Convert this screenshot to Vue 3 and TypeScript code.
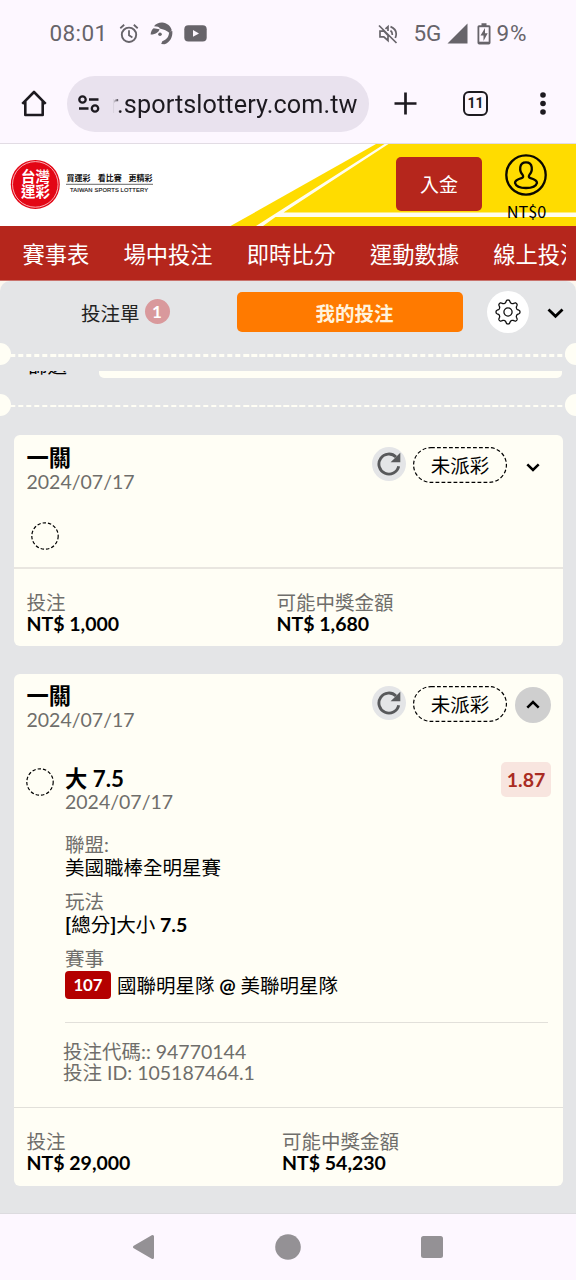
<script setup lang="ts">
interface Field {
  label: string
  parts: string[]
  tag?: string
}
interface Bet {
  title: string
  date: string
  open: boolean
  stake: string
  payout: string
}

const navItems: string[] = ['賽事表', '場中投注', '即時比分', '運動數據', '線上投注']
const bets: Bet[] = [
  { title: '一關', date: '2024/07/17', open: false, stake: 'NT$ 1,000', payout: 'NT$ 1,680' },
  { title: '一關', date: '2024/07/17', open: true, stake: 'NT$ 29,000', payout: 'NT$ 54,230' },
]
// Odd entries of `parts` are Latin runs, set in the bold weight.
const fields: Field[] = [
  { label: '聯盟:', parts: ['美國職棒全明星賽'] },
  { label: '玩法', parts: ['', '[', '總分', ']', '大小', ' 7.5'] },
  { label: '賽事', parts: ['國聯明星隊', ' @ ', '美聯明星隊'], tag: '107' },
]

const gearPath: string = (() => {
  const pts: string[] = []
  const steps = 160
  for (let i = 0; i < steps; i++) {
    const a = (i / steps) * Math.PI * 2
    const r = 10.7 + 1.45 * Math.tanh(1.6 * Math.cos(a * 8) - 0.2)
    pts.push(`${(r * Math.sin(a)).toFixed(2)} ${(-r * Math.cos(a)).toFixed(2)}`)
  }
  return `M${pts.join('L')}Z`
})()
</script>

<template>
  <div class="screen">
    <div class="status">
      <div class="status-left">
        <span class="clock">08:01</span>
        <svg class="alarm" width="20" height="21" viewBox="0 0 20 21" fill="none" stroke="#67646a" stroke-width="1.900">
          <circle cx="10" cy="11.8" r="7.2" />
          <path d="M10 7.2v5l3.4 2.2M1.300 5.2L5.2 1.8M18.700 5.2L14.8 1.8" stroke-width="1.800" />
        </svg>
        <svg class="face" width="23" height="23" viewBox="0 0 23 23">
          <path d="M.6 12.600C.8 9.500 2 7.500 3.600 6.200L9.500 7.200C8.800 9.800 6.200 12.200 .6 12.600Z" fill="#67646a" />
          <path d="M4 4.200C6 1.800 9 .5 12.200.6C17 1 20.300 3.800 21.800 8.200L19.200 10.800C16.500 8 13.500 7.400 9.800 6.400C9.500 5 7 4.200 4 4.200Z" fill="#67646a" />
          <circle cx="10" cy="12.300" r="1.800" fill="#67646a" />
          <path d="M19.200 9.600L22.300 9C23 14.800 20 20.500 14.500 22.200L11.200 22L12.300 19.200C16.800 18 19 14.500 19.200 9.600Z" fill="#67646a" />
        </svg>
        <svg class="tube" width="23" height="17" viewBox="0 0 23 17">
          <rect x=".3" y=".3" width="22.400" height="16.200" rx="4" fill="#67646a" />
          <path d="M9 5l6 3.400l-6 3.400z" fill="#fdf7ff" />
        </svg>
      </div>
      <div class="status-right">
        <svg class="mute" width="20" height="20" viewBox="0 0 20 20" fill="none" stroke="#67646a" stroke-width="1.700">
          <path d="M1 1.500L18.500 19M2 7.200H6L10 11.500V16.500L5.800 12.800H2ZM7.500 4.800L10 2.600V7M12.500 6.500Q14.500 8 14.300 11M12.500 2.600Q20.500 6 17.300 14" />
        </svg>
        <span class="net">5G</span>
        <svg class="signal" width="21" height="21" viewBox="0 0 21 21"><path d="M20.500.5V20.500H.5Z" fill="#67646a" /></svg>
        <svg class="battery" width="14" height="22" viewBox="0 0 14 22">
          <path d="M4.500.3h5v2h2.600q1.400 0 1.400 1.500v16q0 1.800-1.700 1.800H2.200Q.5 21.600.5 19.800V3.800Q.5 2.300 2 2.300h2.500z" fill="#67646a" />
          <path d="M2.300 4.200h9.400v14.500H2.300z" fill="#fdf7ff" />
          <path d="M8 5L3.500 12.500H6.500V18L10.700 10.300H8Z" fill="#67646a" />
        </svg>
        <span class="pct">9%</span>
      </div>
    </div>

    <div class="toolbar">
      <svg class="home" width="26" height="27" viewBox="0 0 26 27" fill="none" stroke="#1d1a20" stroke-width="2.600">
        <path d="M1.300 13.800L13 2L24.700 13.800M4.300 11.500V25H21.700V11.500" stroke-linejoin="round" />
      </svg>
      <div class="url">
        <svg width="22" height="18" viewBox="0 0 22 18" fill="none" stroke="#1d1a20" stroke-width="2.300">
          <circle cx="4.500" cy="4.500" r="3.200" /><path d="M11 4.500H20.500M1 13.500H10.500" /><circle cx="17" cy="13.500" r="3.200" />
        </svg>
        <div class="url-text"><span>r.sportslottery.com.tw</span></div>
      </div>
      <svg class="plus" width="23" height="23" viewBox="0 0 23 23"><path d="M11.500.5V22.500M.5 11.500H22.500" stroke="#1d1a20" stroke-width="2.700" /></svg>
      <div class="tabs-count">11</div>
      <svg class="dots" width="8" height="23" viewBox="0 0 8 23" fill="#1d1a20"><circle cx="4" cy="3" r="2.800" /><circle cx="4" cy="11.500" r="2.800" /><circle cx="4" cy="20" r="2.800" /></svg>
    </div>

    <header class="brand">
      <svg class="brand-bg" width="576" height="82" viewBox="0 0 576 82">
        <path d="M230.500 82L376 0H576V82Z" fill="#ffdc00" />
        <path d="M256 82L384.500 0H388.500L283.500 68.500H576V73H275.500L263 82Z" fill="#fffdf0" />
      </svg>
      <svg class="logo" width="144" height="52" viewBox="0 0 144 52">
        <circle cx="25.300" cy="26.400" r="24.500" fill="#e30615" />
        <circle cx="25.300" cy="26.400" r="22.800" fill="none" stroke="#ffd9dc" stroke-width=".8" />
        <g class="logo-mark" fill="#fff">
          <text x="11" y="24" textLength="29">台灣</text>
          <text x="11" y="38.800" textLength="29">運彩</text>
        </g>
        <g class="logo-slogan" fill="#111">
          <text x="56.500" y="22.800" textLength="24">買運彩</text>
          <text x="87.700" y="22.800" textLength="24">看比賽</text>
          <text x="118.500" y="22.800" textLength="24">更精彩</text>
        </g>
        <path d="M56 26.300H143" stroke="#444" stroke-width=".8" />
        <text class="logo-en" x="60" y="33.900" textLength="78" fill="#111">TAIWAN SPORTS LOTTERY</text>
      </svg>
      <button class="deposit">入金</button>
      <div class="account">
        <svg width="42" height="42" viewBox="0 0 42 42" fill="none" stroke="#0a0800">
          <circle cx="21" cy="21" r="19.700" stroke-width="2.300" />
          <path d="M17.600 20.800C15.300 18.500 15 15.500 15.300 13.200C15.700 10 18 8.300 21 8.300S26.300 10 26.700 13.200C27 15.500 26.700 18.500 24.400 20.800C23.300 22.500 23.800 23.700 25.500 24.200C29 25.200 32 26.300 32 29C31 32.500 26.500 34 21 34S11 32.500 10 29C10 26.300 13 25.200 16.500 24.200C18.200 23.700 18.700 22.500 17.600 20.800Z" stroke-width="2.300" />
        </svg>
        <span>NT$0</span>
      </div>
    </header>

    <nav class="nav">
      <div class="nav-track"><span v-for="n in navItems" :key="n">{{ n }}</span></div>
    </nav>

    <div class="panel-wrap">
      <main class="panel">
        <div class="tabs">
          <div class="slip"><span>投注單</span><span class="badge">1</span></div>
          <div class="mine">我的投注</div>
          <div class="gear">
            <svg width="28" height="28" viewBox="-14 -14 28 28" fill="none" stroke="#111" stroke-width="1.300">
              <path :d="gearPath" /><circle r="4.100" />
            </svg>
          </div>
          <svg class="tabs-chev" width="17" height="11" viewBox="0 0 17 11"><path d="M1.500 1.500L8.500 8.300L15.500 1.500" fill="none" stroke="#000" stroke-width="2.800" /></svg>
        </div>
        <div class="tear first"></div>
        <div class="filter"><span class="filter-label">篩選</span><span class="filter-box"></span></div>
        <div class="tear second"></div>

        <section v-for="(b, i) in bets" :key="i" class="card" :class="{ open: b.open }">
          <div class="head">
            <div class="head-text">
              <div class="title">{{ b.title }}</div>
              <div class="date">{{ b.date }}</div>
            </div>
            <div class="refresh">
              <svg width="24" height="24" viewBox="0 0 24 24">
                <path d="M19 5A10 10 0 1 0 21.700 14.200" fill="none" stroke="#58595b" stroke-width="2.900" />
                <path d="M23.300 .8V10.200H13.600Z" fill="#58595b" />
              </svg>
            </div>
            <div class="state">
              <svg width="94" height="36" viewBox="0 0 94 36"><rect x=".6" y=".6" width="92.800" height="34.800" rx="17.400" fill="none" stroke="#000" stroke-width="1.200" stroke-dasharray="3.800 2.200" /></svg>
              <span>未派彩</span>
            </div>
            <div class="toggle">
              <svg width="14" height="9" viewBox="0 0 14 9"><path :d="b.open ? 'M1.300 7.700L7 2L12.700 7.700' : 'M1.300 1.300L7 7L12.700 1.300'" fill="none" stroke="#000" stroke-width="2.500" /></svg>
            </div>
          </div>

          <div v-if="!b.open" class="collapsed">
            <svg class="ring" width="28" height="28" viewBox="0 0 28 28"><circle cx="14" cy="14" r="13.200" /></svg>
          </div>
          <div v-else class="detail">
            <svg class="ring" width="28" height="28" viewBox="0 0 28 28"><circle cx="14" cy="14" r="13.200" /></svg>
            <div class="detail-main">
              <div class="pick-row">
                <div>
                  <div class="pick">大 7.5</div>
                  <div class="date">2024/07/17</div>
                </div>
                <div class="odds">1.87</div>
              </div>
              <div v-for="f in fields" :key="f.label" class="field">
                <div class="field-label">{{ f.label }}</div>
                <div class="field-value" :class="{ tagged: f.tag }">
                  <span v-if="f.tag" class="tag">{{ f.tag }}</span><span v-for="(p, k) in f.parts" :key="k" class="run" :class="{ latin: k % 2 === 1 }">{{ p }}</span>
                </div>
              </div>
              <div class="codes">
                <div>投注代碼:: 94770144</div>
                <div>投注 ID: 105187464.1</div>
              </div>
            </div>
          </div>

          <div class="sums">
            <div class="sum"><div class="sum-label">投注</div><div class="sum-value">{{ b.stake }}</div></div>
            <div class="sum"><div class="sum-label">可能中獎金額</div><div class="sum-value">{{ b.payout }}</div></div>
          </div>
        </section>
      </main>
    </div>

    <footer class="sysnav">
      <svg width="24" height="26" viewBox="0 0 24 26"><path d="M2.500 13L20.500 2.500V23.500Z" fill="#949195" stroke="#949195" stroke-width="3" stroke-linejoin="round" /></svg>
      <svg width="26" height="26" viewBox="0 0 26 26"><circle cx="13" cy="13" r="12.800" fill="#949195" /></svg>
      <svg width="22" height="22" viewBox="0 0 22 22"><rect width="22" height="22" rx="2.500" fill="#949195" /></svg>
    </footer>
  </div>
</template>

<style>
body { margin: 0; background: #fdf7ff; }
</style>

<style scoped>
* { box-sizing: border-box; }
.screen {
  width: 576px; height: 1280px; overflow: hidden; display: flex; flex-direction: column;
  background: #fdf7ff; color: #000;
  font-family: Lato, "Noto Sans CJK TC", sans-serif; font-size: 19.5px;
}
svg { display: block; flex: none; }

.status { height: 67px; flex: none; display: flex; justify-content: space-between; padding: 0 48.500px 0 49.500px; font-family: Roboto, sans-serif; font-size: 22.5px; color: #67646a; line-height: 67px; }
.status-left, .status-right { display: flex; align-items: center; height: 67px; }
.clock { letter-spacing: .4px; }
.alarm { margin-left: 11.500px; }
.face { margin-left: 11px; }
.tube { margin-left: 11px; }
.net { margin-left: 15px; letter-spacing: -.2px; }
.signal { margin-left: 6px; }
.battery { margin: 0 5.500px 0 9px; }
.pct { letter-spacing: .9px; }

.toolbar { height: 77px; flex: none; display: flex; align-items: center; padding: 0 29px 3px 21px; border-bottom: 1px solid #e2dce4; }
.url { width: 302px; height: 56px; margin-left: 20px; border-radius: 28px; background: #e9e2ee; display: flex; align-items: center; padding-left: 11px; flex: none; }
.url-text { width: 245px; margin-left: 12.500px; height: 40px; overflow: hidden; display: flex; justify-content: flex-end; font: 25.200px/41px Roboto, sans-serif; letter-spacing: .1px; color: #1d1a20; white-space: nowrap; -webkit-mask-image: linear-gradient(90deg, transparent 0, #000 7px); mask-image: linear-gradient(90deg, transparent 0, #000 7px); }
.url-text span { flex: none; }
.plus { margin-left: 25px; }
.tabs-count { width: 25px; height: 25px; margin-left: 46px; border: 2.500px solid #1d1a20; border-radius: 6px; font: bold 14px/21px Roboto, sans-serif; text-align: center; color: #1d1a20; }
.dots { margin-left: auto; }

.brand { height: 82px; flex: none; position: relative; background: #fff; display: flex; }
.brand-bg { position: absolute; left: 0; top: 0; }
.logo { position: relative; margin: 14px 0 0 10px; }
.logo-mark { font: bold 14.500px "Noto Sans CJK TC", sans-serif; }
.logo-slogan { font: 700 8px "Noto Sans CJK TC", sans-serif; }
.logo-en { font: 5.800px "Liberation Sans", sans-serif; stroke: #111; stroke-width: .15px; }
.deposit { position: relative; width: 86px; height: 54px; margin: 13px 0 0 242px; padding: 0; border: 0; border-radius: 5px; background: #b5261c; color: #fff; font: 19px/54px "Noto Sans CJK TC", sans-serif; }
.account { position: relative; width: 60px; margin: 10px 0 0 14px; display: flex; flex-direction: column; align-items: center; font: 16.300px/20px "Noto Sans CJK TC", sans-serif; }
.account span { margin: 5px 0 0 1px; }

.nav { height: 54px; flex: none; background: #b5261c; padding: 0 10px 0 22.500px; }
.nav-track { overflow: hidden; display: flex; gap: 34.200px; white-space: nowrap; color: #fff; font: 22.270px/55px "Noto Sans CJK TC", sans-serif; }
.nav-track span { flex: none; }

.panel-wrap { height: 934px; flex: none; background: #fdf7ef; border-top: 1px solid #c9736d; }
.panel { height: 933px; overflow: hidden; background: #e4e5e7; border-radius: 10px 10px 0 0; border-bottom: 1px solid #dcdbdf; }
.tabs { height: 73px; display: flex; padding-left: 81px; }
.slip { width: 156px; height: 62px; display: flex; align-items: center; color: #222; }
.badge { width: 25px; height: 25px; margin-left: 5px; margin-bottom: 2px; border-radius: 50%; background: #d9999c; color: #fff; font-size: 17px; line-height: 25px; text-align: center; font-weight: bold; }
.mine { width: 226px; height: 40px; margin-top: 11px; border-radius: 5px; background: #ff7a00; color: #fff3dc; font-weight: bold; line-height: 43px; text-align: center; padding-left: 9px; }
.gear { width: 42px; height: 42px; margin: 10px 0 0 24px; border-radius: 50%; background: #fff; display: flex; align-items: center; justify-content: center; }
.tabs-chev { margin: 27px 0 0 18px; }

.tear { position: relative; background: repeating-linear-gradient(90deg, #fffef5 0 5.300px, transparent 5.300px 8.040px) 2.300px 0; }
.tear.first { height: 3px; }
.tear.second { height: 2px; margin-top: 27px; }
.tear::before, .tear::after { content: ""; position: absolute; top: -11px; width: 22px; height: 22px; border-radius: 50%; background: #fffef5; }
.tear::before { left: -11px; }
.tear::after { right: -11px; }
.filter { height: 7px; margin-top: 14px; overflow: hidden; display: flex; align-items: flex-end; padding: 0 14px 0 28px; }
.filter-label { width: 71px; line-height: 24px; height: 24px; flex: none; }
.filter-box { flex: 1; height: 36px; border-radius: 5px; background: #fffef5; }

.card { margin: 28px 13px 0 14px; height: 211px; border-radius: 6px; background: #fffef5; display: flex; flex-direction: column; }
.card.open { height: 512px; }
.head { display: flex; padding: 9px 12px 0 12.500px; height: 57px; flex: none; }
.head-text { flex: 1; }
.title { font-weight: bold; font-size: 22.300px; line-height: 27px; }
.open .title { line-height: 26px; }
.date { color: #6f6e6b; line-height: 21px; }
.refresh { width: 34px; height: 34px; margin: 3px 7px 0 0; border-radius: 50%; background: #e4e5e7; display: flex; align-items: center; justify-content: center; }
.state { width: 94px; height: 36px; margin: 3px 8px 0 0; position: relative; line-height: 37px; text-align: center; }
.state svg { position: absolute; left: 0; top: 0; }
.toggle { width: 36px; height: 36px; margin-top: 5px; border-radius: 50%; display: flex; align-items: center; justify-content: center; }
.open .toggle { background: #cfcfcf; margin-top: 4px; padding-bottom: 2px; }
.ring circle { fill: none; stroke: #000; stroke-width: 1.200px; stroke-dasharray: 3.400 2; }
.collapsed { height: 77px; flex: none; padding: 30px 0 0 16.500px; border-bottom: 2px solid #e9e6e0; }

.detail { height: 377px; flex: none; display: flex; padding: 35px 12px 0 12px; border-bottom: 1px solid #e2e0da; }
.detail .ring { margin-top: 2px; }
.detail-main { flex: 1; padding-left: 11px; }
.pick-row { display: flex; justify-content: space-between; height: 67px; }
.pick { font-weight: bold; font-size: 22.300px; line-height: 25px; }
.pick-row .date { margin-top: .4px; }
.odds { width: 50px; height: 35px; margin-top: -4px; border-radius: 5px; background: #f8e5df; color: #a92b22; font-weight: bold; font-size: 19.500px; line-height: 36px; text-align: center; }
.field { line-height: 23px; height: 57px; }
.field-label { color: #6f6e6b; }
.run { white-space: pre; }
.latin { font-weight: bold; }
.tagged { display: flex; align-items: center; height: 29px; margin-top: -1px; padding-top: 4px; white-space: nowrap; }
.tag { width: 46px; height: 28px; margin: -1px 6px 0 0; border-radius: 4px; background: #b40000; color: #fff; font-weight: bold; font-size: 16.800px; line-height: 28px; text-align: center; flex: none; }
.codes { margin: 18px 3px 0 0; border-top: 1px solid #e2e0da; padding-top: 18px; line-height: 21px; color: #6f6e6b; }
.codes div { margin-left: -2px; }

.sums { display: flex; padding: 23px 0 0 12.500px; line-height: 21px; }
.sum { width: 250px; }
.open .sum { width: 255.500px; }
.sum-label { color: #6f6e6b; }
.sum-value { font-weight: bold; }

.sysnav { height: 66px; flex: none; display: flex; align-items: center; justify-content: space-between; padding: 0 133px 1px 132px; }
.sysnav svg:nth-child(2) { margin-right: 2px; }
</style>
